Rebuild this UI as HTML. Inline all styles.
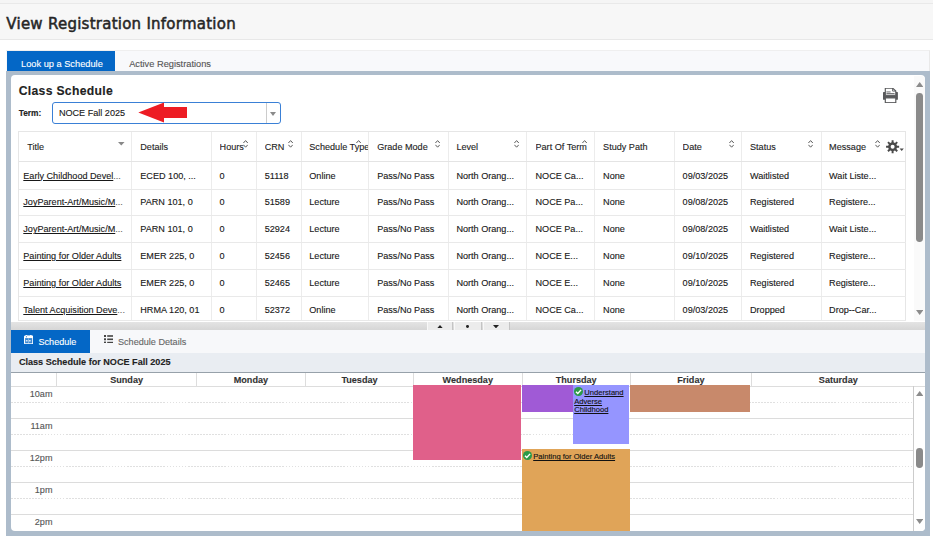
<!DOCTYPE html>
<html lang="en"><head><meta charset="utf-8"><title>View Registration Information</title>
<style>
html,body{margin:0;padding:0;}
body{width:933px;height:543px;overflow:hidden;background:#fff;position:relative;font-family:"Liberation Sans",sans-serif;font-size:9.1px;color:#181818;-webkit-text-stroke:0.12px currentColor;}
.a{position:absolute;}
.t{position:absolute;white-space:nowrap;line-height:12px;height:12px;}
.b{font-weight:bold;}
.u{text-decoration:underline;}
.vl{position:absolute;width:1px;background:#ececec;}
.hl{position:absolute;height:1px;background:#e9e9e9;}
.ev{position:absolute;}
.evt{position:absolute;white-space:nowrap;font-size:7.6px;line-height:8.4px;color:#111;text-decoration:underline;text-decoration-thickness:0.7px;text-underline-offset:0.8px;}
</style></head>
<body>
<div class="a" style="left:0;top:0;width:933px;height:3px;background:#f5f5f5"></div>
<div class="a" style="left:0;top:3px;width:933px;height:1px;background:#e9e9e9"></div>
<div class="a" style="left:0;top:4px;width:933px;height:35.6px;background:#f7f7f7"></div>
<div class="a" style="left:0;top:39.3px;width:933px;height:1px;background:#e8e8e8"></div>
<div class="a" id="title" style="left:6.3px;top:13.61px;font-family:'DejaVu Sans',sans-serif;font-size:15px;letter-spacing:0.25px;-webkit-text-stroke:0.5px #262626;line-height:20px;color:#262626;white-space:nowrap;">View Registration Information</div>
<div class="a" style="left:6px;top:50px;width:924px;height:21px;background:#f8f9fb;border-top:1px solid #efefef;border-right:1px solid #e9e9e9;box-sizing:border-box"></div>
<div class="a" style="left:7px;top:51px;width:108px;height:20px;background:#0467c6"></div>
<div class="t" id="tab1" style="left:21px;top:57.65px;color:#fff;font-size:9.25px">Look up a Schedule</div>
<div class="t" id="tab2" style="left:129.2px;top:57.65px;color:#555;font-size:9.25px">Active Registrations</div>
<div class="a" style="left:6px;top:71px;width:924px;height:464.5px;background:#adbccb"></div>
<div class="a" style="left:11px;top:75px;width:914px;height:455.6px;background:#fff;border-radius:4px"></div>
<div class="a b" id="cs" style="left:18.7px;top:82.97px;font-size:12.2px;letter-spacing:0.3px;line-height:16px;white-space:nowrap;color:#222">Class Schedule</div>
<div class="t b" id="term" style="left:18.7px;top:106.59px;font-size:8.4px;color:#222">Term:</div>
<div class="a" style="left:52px;top:102.3px;width:228.5px;height:21.3px;box-sizing:border-box;border:1px solid #3a80d6;border-radius:3px;background:#fff"></div>
<div class="a" style="left:266px;top:103.3px;width:1px;height:19.3px;background:#ccc"></div>
<svg class="a" style="left:270.3px;top:111.8px" width="6" height="4" viewBox="0 0 6 4"><path d="M0 0H6L3 4Z" fill="#8a8a8a"/></svg>
<div class="t" id="sel" style="left:58.9px;top:106.75px;">NOCE Fall 2025</div>
<svg class="a" style="left:138px;top:101.5px" width="50" height="21" viewBox="138 101.5 50 21"><path d="M138.3 112.1L164 102L164 106.4L187 106.4L187 117.6L164 117.6L164 122Z" fill="#ed1c24"/></svg>
<svg class="a" style="left:883px;top:88px" width="15" height="15" viewBox="0 0 15 15">
<rect x="0" y="3.9" width="14.9" height="7.9" rx="0.6" fill="#58595b"/>
<path d="M2.3 7.2V0.1H9.6L12.8 3.1V7.2Z" fill="#fff" stroke="#58595b" stroke-width="1.15"/>
<path d="M9.6 0.1V3.1H12.8" fill="none" stroke="#58595b" stroke-width="0.9"/>
<rect x="3.4" y="3.5" width="4.2" height="0.9" fill="#58595b"/>
<rect x="3.4" y="5.2" width="8.2" height="0.9" fill="#58595b"/>
<rect x="2.3" y="9.9" width="10.5" height="4.8" fill="#fff" stroke="#58595b" stroke-width="1.15"/>
</svg>
<div class="a" style="left:914px;top:76px;width:11px;height:245px;background:#fafafa;border-top-right-radius:4px"></div>
<svg class="a" style="left:916px;top:82px" width="7.4" height="5" viewBox="0 0 7.4 5"><path d="M0 5H7.4L3.7 0Z" fill="#8c8c8c"/></svg>
<div class="a" style="left:916.2px;top:92.5px;width:6.8px;height:149px;background:#8a8a8a;border-radius:3.4px"></div>
<svg class="a" style="left:916px;top:309.7px" width="7.4" height="5" viewBox="0 0 7.4 5"><path d="M0 0H7.4L3.7 5Z" fill="#8c8c8c"/></svg>
<div class="hl" style="left:18.5px;top:131.0px;width:887.0px;background:#e6e6e6"></div>
<div class="vl" style="left:18.0px;top:131.0px;height:190.3px;background:#e6e6e6"></div>
<div class="vl" style="left:905.0px;top:131.0px;height:190.3px;background:#e6e6e6"></div>
<div class="vl" style="left:131.0px;top:131.5px;height:189.3px"></div>
<div class="vl" style="left:211.1px;top:131.5px;height:189.3px"></div>
<div class="vl" style="left:256.1px;top:131.5px;height:189.3px"></div>
<div class="vl" style="left:301.1px;top:131.5px;height:189.3px"></div>
<div class="vl" style="left:368.0px;top:131.5px;height:189.3px"></div>
<div class="vl" style="left:448.0px;top:131.5px;height:189.3px"></div>
<div class="vl" style="left:525.9px;top:131.5px;height:189.3px"></div>
<div class="vl" style="left:593.8px;top:131.5px;height:189.3px"></div>
<div class="vl" style="left:673.8px;top:131.5px;height:189.3px"></div>
<div class="vl" style="left:741.1px;top:131.5px;height:189.3px"></div>
<div class="vl" style="left:820.5px;top:131.5px;height:189.3px"></div>
<div class="hl" style="left:18.5px;top:160.8px;width:887.0px;height:1.6px;background:#e4e4e4"></div>
<div class="hl" style="left:18.5px;top:188.6px;width:887.0px"></div>
<div class="hl" style="left:18.5px;top:215.2px;width:887.0px"></div>
<div class="hl" style="left:18.5px;top:242.1px;width:887.0px"></div>
<div class="hl" style="left:18.5px;top:269.0px;width:887.0px"></div>
<div class="hl" style="left:18.5px;top:295.6px;width:887.0px"></div>
<div class="hl" style="left:18.5px;top:320.3px;width:887.0px"></div>
<div class="t" style="left:27.3px;top:140.65px;width:103.7px;overflow:hidden;color:#1e1e1e">Title</div>
<div class="t" style="left:140.3px;top:140.65px;width:70.8px;overflow:hidden;color:#1e1e1e">Details</div>
<div class="t" style="left:219.6px;top:140.65px;width:36.5px;overflow:hidden;color:#1e1e1e">Hours</div>
<svg class="a" style="left:243.2px;top:140.0px" width="5.2" height="7.8" viewBox="0 0 5.2 7.8"><path d="M0.4 3L2.6 0.6L4.8 3M0.4 4.8L2.6 7.2L4.8 4.8" fill="none" stroke="#5a5a5a" stroke-width="1"/></svg>
<div class="t" style="left:264.7px;top:140.65px;width:36.4px;overflow:hidden;color:#1e1e1e">CRN</div>
<svg class="a" style="left:288.0px;top:140.0px" width="5.2" height="7.8" viewBox="0 0 5.2 7.8"><path d="M0.4 3L2.6 0.6L4.8 3M0.4 4.8L2.6 7.2L4.8 4.8" fill="none" stroke="#5a5a5a" stroke-width="1"/></svg>
<div class="t" style="left:309.3px;top:140.65px;width:58.7px;overflow:hidden;color:#1e1e1e">Schedule Type</div>
<svg class="a" style="left:355.6px;top:140.0px" width="5.2" height="7.8" viewBox="0 0 5.2 7.8"><path d="M0.4 3L2.6 0.6L4.8 3" fill="none" stroke="#5a5a5a" stroke-width="1"/></svg>
<div class="t" style="left:377.2px;top:140.65px;width:70.8px;overflow:hidden;color:#1e1e1e">Grade Mode</div>
<svg class="a" style="left:435.0px;top:140.0px" width="5.2" height="7.8" viewBox="0 0 5.2 7.8"><path d="M0.4 3L2.6 0.6L4.8 3M0.4 4.8L2.6 7.2L4.8 4.8" fill="none" stroke="#5a5a5a" stroke-width="1"/></svg>
<div class="t" style="left:456.4px;top:140.65px;width:69.5px;overflow:hidden;color:#1e1e1e">Level</div>
<svg class="a" style="left:514.2px;top:140.0px" width="5.2" height="7.8" viewBox="0 0 5.2 7.8"><path d="M0.4 3L2.6 0.6L4.8 3M0.4 4.8L2.6 7.2L4.8 4.8" fill="none" stroke="#5a5a5a" stroke-width="1"/></svg>
<div class="t" style="left:535.5px;top:140.65px;width:58.3px;overflow:hidden;color:#1e1e1e">Part Of Term</div>
<svg class="a" style="left:581.8px;top:140.0px" width="5.2" height="7.8" viewBox="0 0 5.2 7.8"><path d="M0.4 3L2.6 0.6L4.8 3" fill="none" stroke="#5a5a5a" stroke-width="1"/></svg>
<div class="t" style="left:603.1px;top:140.65px;width:70.7px;overflow:hidden;color:#1e1e1e">Study Path</div>
<div class="t" style="left:682.6px;top:140.65px;width:58.5px;overflow:hidden;color:#1e1e1e">Date</div>
<svg class="a" style="left:728.5px;top:140.0px" width="5.2" height="7.8" viewBox="0 0 5.2 7.8"><path d="M0.4 3L2.6 0.6L4.8 3M0.4 4.8L2.6 7.2L4.8 4.8" fill="none" stroke="#5a5a5a" stroke-width="1"/></svg>
<div class="t" style="left:750.0px;top:140.65px;width:70.5px;overflow:hidden;color:#1e1e1e">Status</div>
<svg class="a" style="left:808.0px;top:140.0px" width="5.2" height="7.8" viewBox="0 0 5.2 7.8"><path d="M0.4 3L2.6 0.6L4.8 3M0.4 4.8L2.6 7.2L4.8 4.8" fill="none" stroke="#5a5a5a" stroke-width="1"/></svg>
<div class="t" style="left:829.1px;top:140.65px;width:75.9px;overflow:hidden;color:#1e1e1e">Message</div>
<svg class="a" style="left:875.0px;top:140.0px" width="5.2" height="7.8" viewBox="0 0 5.2 7.8"><path d="M0.4 3L2.6 0.6L4.8 3M0.4 4.8L2.6 7.2L4.8 4.8" fill="none" stroke="#5a5a5a" stroke-width="1"/></svg>
<svg class="a" style="left:118px;top:142px" width="6.6" height="3.6" viewBox="0 0 6.6 3.6"><path d="M0 0H6.6L3.3 3.6Z" fill="#888"/></svg>
<svg class="a" style="left:885px;top:139px" width="20" height="16" viewBox="885 139 20 16"><path d="M899.13 145.72L899.13 147.68L896.99 147.68L896.40 149.11L897.91 150.62L896.52 152.01L895.01 150.50L893.58 151.09L893.58 153.23L891.62 153.23L891.62 151.09L890.19 150.50L888.68 152.01L887.29 150.62L888.80 149.11L888.21 147.68L886.07 147.68L886.07 145.72L888.21 145.72L888.80 144.29L887.29 142.78L888.68 141.39L890.19 142.90L891.62 142.31L891.62 140.17L893.58 140.17L893.58 142.31L895.01 142.90L896.52 141.39L897.91 142.78L896.40 144.29L896.99 145.72ZM890.60 146.70a2.00 2.00 0 1 0 4.00 0a2.00 2.00 0 1 0 -4.00 0Z" fill="#4a4a4a" fill-rule="evenodd"/><path d="M899.6 148.4H903.8L901.7 151Z" fill="#4a4a4a"/></svg>
<div class="t" style="left:23.3px;top:169.65px;"><span class="u">Early Childhood Devel</span><span style="color:#666">...</span></div>
<div class="t" style="left:140.3px;top:169.65px;">ECED 100, ...</div>
<div class="t" style="left:219.6px;top:169.65px;">0</div>
<div class="t" style="left:264.7px;top:169.65px;">51118</div>
<div class="t" style="left:309.3px;top:169.65px;">Online</div>
<div class="t" style="left:377.2px;top:169.65px;">Pass/No Pass</div>
<div class="t" style="left:456.4px;top:169.65px;">North Orang...</div>
<div class="t" style="left:535.5px;top:169.65px;">NOCE Ca...</div>
<div class="t" style="left:603.1px;top:169.65px;">None</div>
<div class="t" style="left:682.6px;top:169.65px;">09/03/2025</div>
<div class="t" style="left:750.0px;top:169.65px;">Waitlisted</div>
<div class="t" style="left:829.1px;top:169.65px;">Wait Liste...</div>
<div class="t" style="left:23.3px;top:196.45px;"><span class="u">JoyParent-Art/Music/M</span><span style="color:#666">...</span></div>
<div class="t" style="left:140.3px;top:196.45px;">PARN 101, 0</div>
<div class="t" style="left:219.6px;top:196.45px;">0</div>
<div class="t" style="left:264.7px;top:196.45px;">51589</div>
<div class="t" style="left:309.3px;top:196.45px;">Lecture</div>
<div class="t" style="left:377.2px;top:196.45px;">Pass/No Pass</div>
<div class="t" style="left:456.4px;top:196.45px;">North Orang...</div>
<div class="t" style="left:535.5px;top:196.45px;">NOCE Pa...</div>
<div class="t" style="left:603.1px;top:196.45px;">None</div>
<div class="t" style="left:682.6px;top:196.45px;">09/08/2025</div>
<div class="t" style="left:750.0px;top:196.45px;">Registered</div>
<div class="t" style="left:829.1px;top:196.45px;">Registere...</div>
<div class="t" style="left:23.3px;top:223.25px;"><span class="u">JoyParent-Art/Music/M</span><span style="color:#666">...</span></div>
<div class="t" style="left:140.3px;top:223.25px;">PARN 101, 0</div>
<div class="t" style="left:219.6px;top:223.25px;">0</div>
<div class="t" style="left:264.7px;top:223.25px;">52924</div>
<div class="t" style="left:309.3px;top:223.25px;">Lecture</div>
<div class="t" style="left:377.2px;top:223.25px;">Pass/No Pass</div>
<div class="t" style="left:456.4px;top:223.25px;">North Orang...</div>
<div class="t" style="left:535.5px;top:223.25px;">NOCE Pa...</div>
<div class="t" style="left:603.1px;top:223.25px;">None</div>
<div class="t" style="left:682.6px;top:223.25px;">09/08/2025</div>
<div class="t" style="left:750.0px;top:223.25px;">Waitlisted</div>
<div class="t" style="left:829.1px;top:223.25px;">Wait Liste...</div>
<div class="t" style="left:23.3px;top:250.05px;"><span class="u">Painting for Older Adults</span></div>
<div class="t" style="left:140.3px;top:250.05px;">EMER 225, 0</div>
<div class="t" style="left:219.6px;top:250.05px;">0</div>
<div class="t" style="left:264.7px;top:250.05px;">52456</div>
<div class="t" style="left:309.3px;top:250.05px;">Lecture</div>
<div class="t" style="left:377.2px;top:250.05px;">Pass/No Pass</div>
<div class="t" style="left:456.4px;top:250.05px;">North Orang...</div>
<div class="t" style="left:535.5px;top:250.05px;">NOCE E...</div>
<div class="t" style="left:603.1px;top:250.05px;">None</div>
<div class="t" style="left:682.6px;top:250.05px;">09/10/2025</div>
<div class="t" style="left:750.0px;top:250.05px;">Registered</div>
<div class="t" style="left:829.1px;top:250.05px;">Registere...</div>
<div class="t" style="left:23.3px;top:276.85px;"><span class="u">Painting for Older Adults</span></div>
<div class="t" style="left:140.3px;top:276.85px;">EMER 225, 0</div>
<div class="t" style="left:219.6px;top:276.85px;">0</div>
<div class="t" style="left:264.7px;top:276.85px;">52465</div>
<div class="t" style="left:309.3px;top:276.85px;">Lecture</div>
<div class="t" style="left:377.2px;top:276.85px;">Pass/No Pass</div>
<div class="t" style="left:456.4px;top:276.85px;">North Orang...</div>
<div class="t" style="left:535.5px;top:276.85px;">NOCE E...</div>
<div class="t" style="left:603.1px;top:276.85px;">None</div>
<div class="t" style="left:682.6px;top:276.85px;">09/10/2025</div>
<div class="t" style="left:750.0px;top:276.85px;">Registered</div>
<div class="t" style="left:829.1px;top:276.85px;">Registere...</div>
<div class="t" style="left:23.3px;top:303.65px;"><span class="u">Talent Acquisition Deve</span><span style="color:#666">...</span></div>
<div class="t" style="left:140.3px;top:303.65px;">HRMA 120, 01</div>
<div class="t" style="left:219.6px;top:303.65px;">0</div>
<div class="t" style="left:264.7px;top:303.65px;">52372</div>
<div class="t" style="left:309.3px;top:303.65px;">Online</div>
<div class="t" style="left:377.2px;top:303.65px;">Pass/No Pass</div>
<div class="t" style="left:456.4px;top:303.65px;">North Orang...</div>
<div class="t" style="left:535.5px;top:303.65px;">NOCE Ca...</div>
<div class="t" style="left:603.1px;top:303.65px;">None</div>
<div class="t" style="left:682.6px;top:303.65px;">09/03/2025</div>
<div class="t" style="left:750.0px;top:303.65px;">Dropped</div>
<div class="t" style="left:829.1px;top:303.65px;">Drop--Car...</div>
<div class="a" style="left:11px;top:321.6px;width:914px;height:8.2px;background:linear-gradient(#e4e4e4,#d6d6d6)"></div>
<div class="a" style="left:426.7px;top:322.2px;width:26.1px;height:7.6px;background:#ececec;border-left:1px solid #f8f8f8;border-right:1px solid #c4c4c4;box-sizing:border-box"></div>
<div class="a" style="left:454.3px;top:322.2px;width:27.5px;height:7.6px;background:#ececec;border-left:1px solid #f8f8f8;border-right:1px solid #c4c4c4;box-sizing:border-box"></div>
<div class="a" style="left:482.5px;top:322.2px;width:27.8px;height:7.6px;background:#ececec;border-left:1px solid #f8f8f8;border-right:1px solid #c4c4c4;box-sizing:border-box"></div>
<svg class="a" style="left:436.5px;top:324.6px" width="6" height="3.4" viewBox="0 0 6 3.4"><path d="M0 3.4H6L3 0Z" fill="#222"/></svg>
<div class="a" style="left:466.2px;top:325.4px;width:2.8px;height:2.8px;border-radius:50%;background:#222"></div>
<svg class="a" style="left:493px;top:325px" width="6" height="3.4" viewBox="0 0 6 3.4"><path d="M0 0H6L3 3.4Z" fill="#222"/></svg>
<div class="a" style="left:11px;top:329.8px;width:914px;height:23.2px;background:#f7f8fa"></div>
<div class="a" style="left:11px;top:329.8px;width:79px;height:23.1px;background:#0467c6"></div>
<svg class="a" style="left:24px;top:334.7px" width="9.4" height="9.6" viewBox="0 0 9.4 9.6">
<rect x="0.55" y="1.1" width="8.2" height="7.7" rx="0.7" fill="rgba(255,255,255,0.22)" stroke="#fff" stroke-width="1.1"/>
<rect x="0.3" y="0.8" width="8.7" height="2.3" fill="#fff"/>
<rect x="1.7" y="0" width="1.5" height="1.6" rx="0.5" fill="#fff"/><rect x="6.1" y="0" width="1.5" height="1.6" rx="0.5" fill="#fff"/>
<circle cx="2.45" cy="1.7" r="0.55" fill="#0467c6"/>
<rect x="1.9" y="5.2" width="1.7" height="1.2" fill="#fff"/><rect x="5" y="5.2" width="1.7" height="1.2" fill="#fff"/>
<rect x="4" y="3.4" width="0.7" height="5" fill="rgba(255,255,255,0.55)"/>
</svg>
<div class="t" id="sch" style="left:38.5px;top:336.15px;color:#fff">Schedule</div>
<svg class="a" style="left:103.8px;top:334.6px" width="9.6" height="8.6" viewBox="0 0 9.6 8.6">
<g fill="#444"><rect x="0" y="0" width="2" height="2"/><rect x="3.2" y="0.2" width="6.2" height="1.6"/>
<rect x="0" y="3.3" width="2" height="2"/><rect x="3.2" y="3.5" width="6.2" height="1.6"/>
<rect x="0" y="6.6" width="2" height="2"/><rect x="3.2" y="6.8" width="6.2" height="1.6"/></g></svg>
<div class="t" id="schd" style="left:118px;top:336.15px;color:#666">Schedule Details</div>
<div class="a" style="left:11px;top:353px;width:914px;height:19.2px;background:#e9edf2"></div>
<div class="a" style="left:11px;top:372.2px;width:914px;height:1.2px;background:#97a1aa"></div>
<div class="t b" id="csf" style="left:18.9px;top:356.25px;color:#222">Class Schedule for NOCE Fall 2025</div>
<div class="hl" style="left:11px;top:385.7px;width:914px;background:#ddd"></div>
<div class="vl" style="left:56.2px;top:373.4px;height:12.8px;background:#ddd"></div>
<div class="vl" style="left:195.9px;top:373.4px;height:12.8px;background:#ddd"></div>
<div class="vl" style="left:304.9px;top:373.4px;height:12.8px;background:#ddd"></div>
<div class="vl" style="left:413.1px;top:373.4px;height:12.8px;background:#ddd"></div>
<div class="vl" style="left:521.5px;top:373.4px;height:12.8px;background:#ddd"></div>
<div class="vl" style="left:630.0px;top:373.4px;height:12.8px;background:#ddd"></div>
<div class="vl" style="left:750.8px;top:373.4px;height:12.8px;background:#ddd"></div>
<div class="t b" style="left:76.6px;top:374.15px;width:100px;text-align:center;color:#333">Sunday</div>
<div class="t b" style="left:200.9px;top:374.15px;width:100px;text-align:center;color:#333">Monday</div>
<div class="t b" style="left:309.5px;top:374.15px;width:100px;text-align:center;color:#333">Tuesday</div>
<div class="t b" style="left:417.8px;top:374.15px;width:100px;text-align:center;color:#333">Wednesday</div>
<div class="t b" style="left:526.2px;top:374.15px;width:100px;text-align:center;color:#333">Thursday</div>
<div class="t b" style="left:640.9px;top:374.15px;width:100px;text-align:center;color:#333">Friday</div>
<div class="t b" style="left:788.3px;top:374.15px;width:100px;text-align:center;color:#333">Saturday</div>
<div class="hl" style="left:11px;top:417.7px;width:903px;background:#dcdcdc"></div>
<div class="hl" style="left:11px;top:449.7px;width:903px;background:#dcdcdc"></div>
<div class="hl" style="left:11px;top:481.7px;width:903px;background:#dcdcdc"></div>
<div class="hl" style="left:11px;top:513.7px;width:903px;background:#dcdcdc"></div>
<div class="a" style="left:11px;top:401.9px;width:903px;height:1px;background:repeating-linear-gradient(to right,#e0e0e0 0,#e0e0e0 1.6px,transparent 1.6px,transparent 3.05px)"></div>
<div class="a" style="left:11px;top:433.9px;width:903px;height:1px;background:repeating-linear-gradient(to right,#e0e0e0 0,#e0e0e0 1.6px,transparent 1.6px,transparent 3.05px)"></div>
<div class="a" style="left:11px;top:465.9px;width:903px;height:1px;background:repeating-linear-gradient(to right,#e0e0e0 0,#e0e0e0 1.6px,transparent 1.6px,transparent 3.05px)"></div>
<div class="a" style="left:11px;top:497.9px;width:903px;height:1px;background:repeating-linear-gradient(to right,#e0e0e0 0,#e0e0e0 1.6px,transparent 1.6px,transparent 3.05px)"></div>
<div class="t" style="left:2.5px;top:387.85px;width:50px;text-align:right;color:#555">10am</div>
<div class="t" style="left:2.5px;top:419.85px;width:50px;text-align:right;color:#555">11am</div>
<div class="t" style="left:2.5px;top:451.85px;width:50px;text-align:right;color:#555">12pm</div>
<div class="t" style="left:2.5px;top:483.85px;width:50px;text-align:right;color:#555">1pm</div>
<div class="t" style="left:2.5px;top:515.85px;width:50px;text-align:right;color:#555">2pm</div>
<div class="vl" style="left:913.4px;top:386.2px;height:144.4px;background:#ccc"></div>
<div class="a" style="left:914.4px;top:386.7px;width:10.6px;height:143.9px;background:#fff;border-bottom-right-radius:4px"></div>
<svg class="a" style="left:915.8px;top:391.3px" width="7.4" height="5" viewBox="0 0 7.4 5"><path d="M0 5H7.4L3.7 0Z" fill="#8c8c8c"/></svg>
<div class="a" style="left:916.2px;top:448px;width:6.8px;height:20.3px;background:#8a8a8a;border-radius:3.4px"></div>
<svg class="a" style="left:915.8px;top:518.6px" width="7.4" height="5" viewBox="0 0 7.4 5"><path d="M0 0H7.4L3.7 5Z" fill="#8c8c8c"/></svg>
<div class="ev" style="left:413.4px;top:385.2px;width:107.6px;height:74.8px;background:#e0608a"></div>
<div class="ev" style="left:522.2px;top:385.2px;width:51.0px;height:26.6px;background:#a05ad6"></div>
<div class="ev" style="left:573.0px;top:385.2px;width:56.1px;height:58.5px;background:#9595ff"></div>
<div class="ev" style="left:630.2px;top:385.2px;width:119.8px;height:26.6px;background:#c8896b"></div>
<div class="ev" style="left:522.2px;top:449.2px;width:107.5px;height:81.4px;background:#e0a458"></div>
<svg class="a" style="left:574.0px;top:387.2px" width="9.0" height="9.0" viewBox="0 0 10 10"><circle cx="5" cy="5" r="5" fill="#2b9a47"/><path d="M2.2 5.2L4.2 7.2L7.9 3.2" fill="none" stroke="#fff" stroke-width="1.6"/></svg>
<div class="evt" style="left:584.3px;top:389.07px">Understand</div>
<div class="evt" style="left:574.2px;top:397.57px">Adverse</div>
<div class="evt" style="left:574.2px;top:405.87px">Childhood</div>
<svg class="a" style="left:522.5px;top:451.4px" width="9.0" height="9.0" viewBox="0 0 10 10"><circle cx="5" cy="5" r="5" fill="#2b9a47"/><path d="M2.2 5.2L4.2 7.2L7.9 3.2" fill="none" stroke="#fff" stroke-width="1.6"/></svg>
<div class="evt" style="left:533.2px;top:453.37px">Painting for Older Adults</div>
</body></html>
